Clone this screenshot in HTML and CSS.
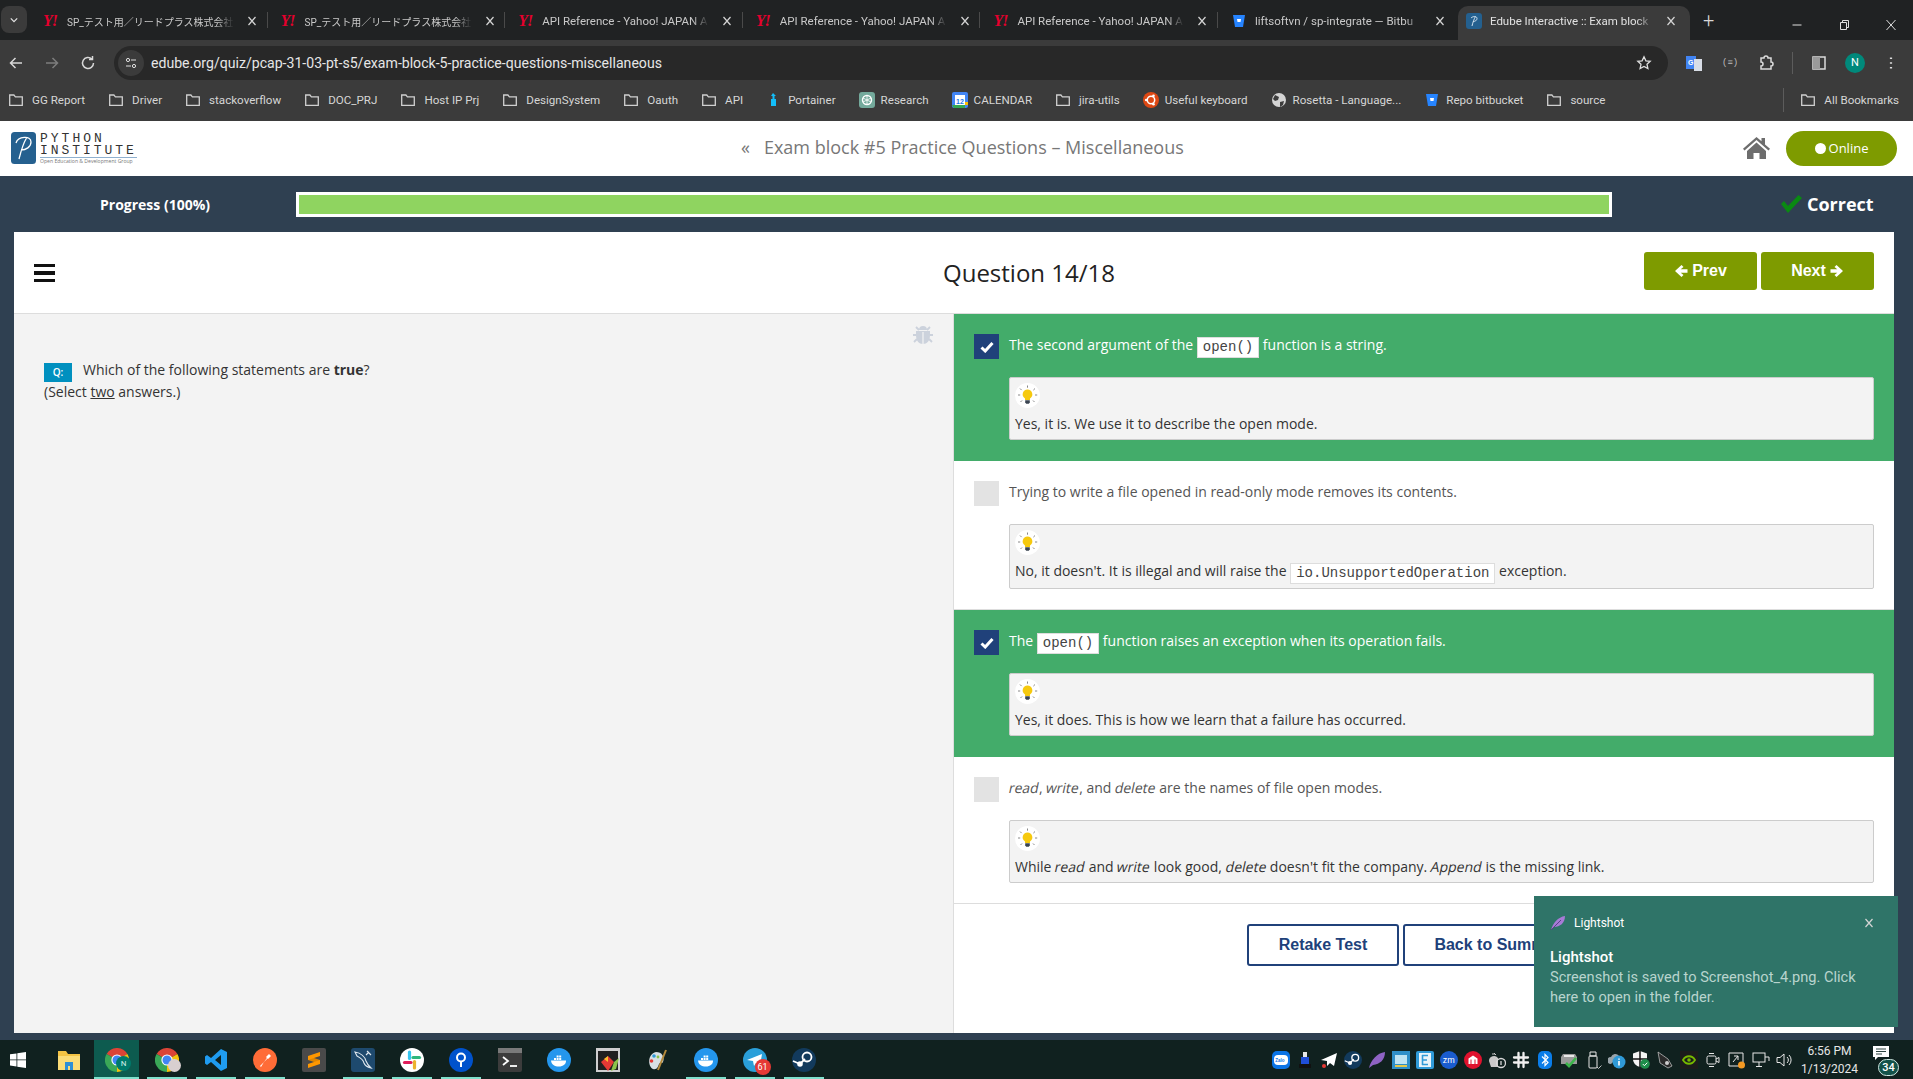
FILE: index.html
```html
<!DOCTYPE html>
<html lang="en">
<head>
<meta charset="utf-8">
<title>Edube Interactive :: Exam block</title>
<link rel="stylesheet" href="styles.css">
</head>
<body>
<svg class="sprite" xmlns="http://www.w3.org/2000/svg">
  <symbol id="folder" viewBox="0 0 16 16"><path d="M1.700 3h4.200l1.500 1.800h6.900v8.500H1.700z" fill="none" stroke="#d0d0d0" stroke-width="1.300"/></symbol>
  <symbol id="x" viewBox="0 0 10 10"><path d="M1.500 1l7 8M8.500 1l-7 8" stroke="#d5d5d5" stroke-width="1.200" fill="none"/></symbol>
  <symbol id="bitbucket" viewBox="0 0 16 16"><path d="M2 2h12l-2 12H4z" fill="#2684ff"/><path d="M6 6h4l-.5 3h-3z" fill="#fff"/></symbol>
  <symbol id="chrome" viewBox="0 0 24 24"><path d="M12 12L1.600 6A12 12 0 0 1 22.400 6Z" fill="#db4437"/><path d="M12 12L22.400 6A12 12 0 0 1 12 24Z" fill="#f4c20d"/><path d="M12 12L12 24A12 12 0 0 1 1.600 6Z" fill="#3aa757"/><circle cx="12" cy="12" r="5.600" fill="#fff"/><circle cx="12" cy="12" r="4.500" fill="#4285f4"/></symbol>
  <symbol id="docker" viewBox="0 0 24 24"><circle cx="12" cy="12" r="12" fill="#2496ed"/><path d="M4 12.500h15c.3 3.500-3 6-7 6-4.500 0-7.500-2-8-6z" fill="#fff"/><path d="M7 10h2v2H7zM9.600 10h2v2h-2zM12.200 10h2v2h-2zM9.600 7.500h2v2h-2zM12.200 7.500h2v2h-2z" fill="#fff"/></symbol>
  <symbol id="steam" viewBox="0 0 24 24"><circle cx="12" cy="12" r="12" fill="#123a5c"/><circle cx="15" cy="9" r="4.500" fill="none" stroke="#fff" stroke-width="1.800"/><circle cx="8" cy="16" r="2.800" fill="#fff"/><path d="M1 13l7 3 5-5" stroke="#fff" stroke-width="1.800" fill="none"/></symbol>
  <symbol id="bulb" viewBox="0 0 25 25"><circle cx="12.500" cy="12.500" r="12.500" fill="#fff"/><path d="M12.500 6.500a4.800 4.800 0 0 0-2.500 8.900v1.600h5v-1.600a4.800 4.800 0 0 0-2.500-8.900z" fill="#f6c90e"/><path d="M10.200 17.200h4.600v2.300l-1 1.300h-2.600l-1-1.300z" fill="#3a4450"/><path d="M12.500 2.500v2.200M5 5.500l1.600 1.600M20 5.500l-1.600 1.600M3 12h2.200M20 12h2.200M5.500 19l1.500-1.500M19.500 19L18 17.500" stroke="#6b6b6b" stroke-width=".8"/></symbol>
  <symbol id="tick" viewBox="0 0 14 12"><path d="M1.500 6.500l3.700 3.500 7.300-8" fill="none" stroke="#fff" stroke-width="3"/></symbol>
</svg>

<div class="tabstrip">
  <button class="tab-list"><svg class="chev" viewBox="0 0 10 6"><path d="M1 1l4 4 4-4" fill="none" stroke="#e4e4e4" stroke-width="1.500"/></svg></button>
  <div class="tab"><span class="yahoo">Y!</span><span class="tab-title tab-jp">SP_テスト用／リードプラス株式会社</span><svg class="tab-x"><use href="#x"/></svg></div>
  <div class="tab"><span class="yahoo">Y!</span><span class="tab-title tab-jp">SP_テスト用／リードプラス株式会社</span><svg class="tab-x"><use href="#x"/></svg></div>
  <div class="tab"><span class="yahoo">Y!</span><span class="tab-title">API Reference - Yahoo! JAPAN A</span><svg class="tab-x"><use href="#x"/></svg></div>
  <div class="tab"><span class="yahoo">Y!</span><span class="tab-title">API Reference - Yahoo! JAPAN A</span><svg class="tab-x"><use href="#x"/></svg></div>
  <div class="tab"><span class="yahoo">Y!</span><span class="tab-title">API Reference - Yahoo! JAPAN A</span><svg class="tab-x"><use href="#x"/></svg></div>
  <div class="tab tab-plain"><svg class="tab-fav"><use href="#bitbucket"/></svg><span class="tab-title">liftsoftvn / sp-integrate — Bitbu</span><svg class="tab-x"><use href="#x"/></svg></div>
  <div class="tab tab-active"><svg class="tab-fav" viewBox="0 0 16 16"><rect width="16" height="16" rx="3" fill="#24608f"/><path d="M6 13C7 9 8 6 9.500 3.500M5 5c2-2 6-2 6 .5 0 2-2 3-4 3" stroke="#cfe0ee" fill="none"/></svg><span class="tab-title">Edube Interactive :: Exam block</span><svg class="tab-x"><use href="#x"/></svg></div>
  <span class="new-tab">+</span>
  <div class="win-controls">
    <svg class="win-btn" viewBox="0 0 12 12"><path d="M1.500 6h9" stroke="#e0e0e0"/></svg>
    <svg class="win-btn" viewBox="0 0 12 12"><path d="M2.500 3.500h6v7h-6zM4.500 3.500v-2h6v7h-2" fill="none" stroke="#e0e0e0"/></svg>
    <svg class="win-btn" viewBox="0 0 12 12"><path d="M1.500 1l9 10M10.500 1l-9 10" stroke="#e0e0e0"/></svg>
  </div>
</div>

<div class="toolbar">
  <svg class="nav-ico" viewBox="0 0 16 16"><path d="M14 8H3M7.500 3L2.500 8l5 5" fill="none" stroke="#d8d8d8" stroke-width="1.500"/></svg>
  <svg class="nav-ico" viewBox="0 0 16 16"><path d="M2 8h11M8.500 3l5 5-5 5" fill="none" stroke="#7d7d7d" stroke-width="1.500"/></svg>
  <svg class="nav-ico nav-last" viewBox="0 0 16 16"><path d="M13.500 8a5.500 5.500 0 1 1-1.700-4M12.500 1v3.500H9" fill="none" stroke="#d8d8d8" stroke-width="1.500"/></svg>
  <div class="omnibox">
    <span class="site-tune"><svg viewBox="0 0 14 14"><circle cx="4" cy="4" r="1.600" fill="none" stroke="#e0e0e0"/><path d="M7 4h5M2 10h5" stroke="#e0e0e0"/><circle cx="10" cy="10" r="1.600" fill="none" stroke="#e0e0e0"/></svg></span>
    <span class="url">edube.org/quiz/pcap-31-03-pt-s5/exam-block-5-practice-questions-miscellaneous</span>
    <svg class="star" viewBox="0 0 16 16"><path d="M8 1.800l1.900 4 4.300.5-3.200 3 .9 4.300L8 11.400l-3.900 2.200.9-4.300-3.200-3 4.300-.5z" fill="none" stroke="#e0e0e0" stroke-width="1.300"/></svg>
  </div>
  <div class="ext-tools">
    <svg class="ext" viewBox="0 0 16 16"><path d="M0 1h10v13H0z" fill="#4285f4"/><path d="M8 4h8v12H8z" fill="#d8dde6"/><text x="2" y="10" class="ext-g">G</text></svg>
    <span class="ext-mini">(≡)</span>
    <svg class="ext" viewBox="0 0 16 16"><path d="M3 3h3a2 2 0 0 1 4 0h3v4a2 2 0 0 1 0 4v3H3v-3a2 2 0 0 0 0-4z" fill="none" stroke="#dcdcdc" stroke-width="1.500"/></svg>
    <span class="tool-sep"></span>
    <svg class="ext" viewBox="0 0 16 16"><rect x="2" y="2" width="12" height="12" fill="none" stroke="#dcdcdc" stroke-width="1.500"/><rect x="2" y="2" width="7" height="12" fill="#9a9a9a"/></svg>
    <span class="avatar">N</span>
    <svg class="ext" viewBox="0 0 16 16"><path d="M8 2.500v1.500M8 7.300v1.500M8 12v1.500" stroke="#dcdcdc" stroke-width="2.200"/></svg>
  </div>
</div>

<div class="bookmarks">
  <span class="bm"><svg class="bm-ico"><use href="#folder"/></svg>GG Report</span>
  <span class="bm"><svg class="bm-ico"><use href="#folder"/></svg>Driver</span>
  <span class="bm"><svg class="bm-ico"><use href="#folder"/></svg>stackoverflow</span>
  <span class="bm"><svg class="bm-ico"><use href="#folder"/></svg>DOC_PRJ</span>
  <span class="bm"><svg class="bm-ico"><use href="#folder"/></svg>Host IP Prj</span>
  <span class="bm"><svg class="bm-ico"><use href="#folder"/></svg>DesignSystem</span>
  <span class="bm"><svg class="bm-ico"><use href="#folder"/></svg>Oauth</span>
  <span class="bm"><svg class="bm-ico"><use href="#folder"/></svg>API</span>
  <span class="bm bm-fav"><svg class="bm-ico" viewBox="0 0 16 16"><path d="M7 1l3 3H8.500v3H10v7H5V7h1.500V4H5z" fill="#13bef9"/></svg>Portainer</span>
  <span class="bm bm-fav"><svg class="bm-ico" viewBox="0 0 16 16"><rect width="16" height="16" rx="3" fill="#74aa9c"/><circle cx="8" cy="8" r="4.500" fill="none" stroke="#fff" stroke-width="1.400"/><path d="M8 3.500v9M4 6l8 4M12 6l-8 4" stroke="#fff" stroke-width=".8"/></svg>Research</span>
  <span class="bm bm-fav"><svg class="bm-ico" viewBox="0 0 16 16"><rect width="16" height="16" rx="2" fill="#4285f4"/><rect x="3" y="3" width="10" height="10" fill="#fff"/><path d="M0 13h13v3H2z" fill="#34a853"/><path d="M13 13h3v-3h-3z" fill="#fbbc04"/><text x="4" y="11.500" class="cal-num">12</text></svg>CALENDAR</span>
  <span class="bm"><svg class="bm-ico"><use href="#folder"/></svg>jira-utils</span>
  <span class="bm bm-fav"><svg class="bm-ico" viewBox="0 0 16 16"><circle cx="8" cy="8" r="8" fill="#dd4814"/><circle cx="8" cy="8" r="3.700" fill="none" stroke="#fff" stroke-width="1.500"/><circle cx="3.200" cy="8" r="1.300" fill="#fff"/><circle cx="10.500" cy="3.800" r="1.300" fill="#fff"/><circle cx="10.500" cy="12.200" r="1.300" fill="#fff"/></svg>Useful keyboard</span>
  <span class="bm bm-fav"><svg class="bm-ico" viewBox="0 0 16 16"><circle cx="8" cy="8" r="7" fill="#d4d4d4"/><path d="M4 3l4 2-1 3-3 1-2-2zM9 10l4-1-1 4-3 2z" fill="#3c3c3c"/></svg>Rosetta - Language...</span>
  <span class="bm bm-fav"><svg class="bm-ico"><use href="#bitbucket"/></svg>Repo bitbucket</span>
  <span class="bm"><svg class="bm-ico"><use href="#folder"/></svg>source</span>
  <span class="bm-all"><svg class="bm-ico"><use href="#folder"/></svg>All Bookmarks</span>
</div>

<header class="site-head">
  <div class="logo">
    <svg class="logo-mark" viewBox="0 0 25 32"><rect width="25" height="32" rx="3.500" fill="#25608f"/><path d="M8 27C10 19 12.500 11 15.500 6M5 11C7 4.500 20 3 20 10c0 5-5 8-10 8" fill="none" stroke="#fff" stroke-width="1.300"/></svg>
    <div class="logo-text">
      <span class="logo-l1">PYTHON</span>
      <span class="logo-l2">INSTITUTE</span>
      <span class="logo-l3">Open Education &amp; Development Group</span>
    </div>
  </div>
  <div class="site-title"><span class="title-back">«</span>Exam block #5 Practice Questions – Miscellaneous</div>
  <svg class="home" viewBox="0 0 27 22"><path d="M13.500 0L0 11.800l1.500 1.700L13.500 3l12 10.500 1.500-1.700-5-4.400V1h-3.500v3.300z" fill="#6d6d6d"/><path d="M4 14L13.500 5.500 23 14v8h-6.500v-6h-6v6H4z" fill="#6d6d6d"/></svg>
  <div class="online"><span class="online-dot"></span>Online</div>
</header>

<main class="quiz">
  <div class="progress-row">
    <div class="progress-label">Progress (100%)</div>
    <div class="progress-track"><div class="progress-fill"></div></div>
    <div class="verdict">
      <svg class="verdict-tick" viewBox="0 0 22 18"><path d="M1 9l3-3 4 5L18.500 0 22 3 8 18z" fill="#0a8a12"/></svg>
      Correct
    </div>
  </div>

  <section class="card">
    <div class="card-head">
      <div class="burger"><span></span><span></span><span></span></div>
      <h1 class="q-title">Question 14/18</h1>
      <div class="pager">
        <button class="pager-btn"><svg class="arrow" viewBox="0 0 14 14"><path d="M7.500 1L1 7l6.500 6 2-2-2.800-2.300h6.800V5.300H6.700L9.500 3z" fill="#fff"/></svg>Prev</button>
        <button class="pager-btn">Next<svg class="arrow" viewBox="0 0 14 14"><path d="M6.500 1L13 7l-6.500 6-2-2 2.800-2.300H.5V5.300h6.800L4.500 3z" fill="#fff"/></svg></button>
      </div>
    </div>

    <div class="card-body">
      <div class="q-panel">
        <svg class="bug" viewBox="0 0 20 24"><path d="M6 6a4 4 0 0 1 8 0zM3 7h14v4c0 6-3 9-7 9s-7-3-7-9z" fill="#ccd2dc"/><path d="M3 3l3 3M17 3l-3 3M0 11h3M17 11h3M1 18l3-3M19 18l-3-3" stroke="#ccd2dc" stroke-width="1.800"/><path d="M10 8v12" stroke="#f3f3f3" stroke-width="1.200"/></svg>
        <p class="q-text"><span class="q-badge">Q:</span>Which of the following statements are <b>true</b>?<br>(Select <u>two</u> answers.)</p>
      </div>

      <div class="a-panel">
        <div class="answer answer-ok">
          <div class="a-head">
            <span class="cb cb-on"><svg class="tick"><use href="#tick"/></svg></span>
            <span class="a-text">The second argument of the <code>open()</code> function is a string.</span>
          </div>
          <div class="feedback">
            <svg class="bulb"><use href="#bulb"/></svg>
            <div class="fb-text">Yes, it is. We use it to describe the open mode.</div>
          </div>
        </div>

        <div class="answer answer-line">
          <div class="a-head">
            <span class="cb"></span>
            <span class="a-text">Trying to write a file opened in read-only mode removes its contents.</span>
          </div>
          <div class="feedback">
            <svg class="bulb"><use href="#bulb"/></svg>
            <div class="fb-text fb-code">No, it doesn't. It is illegal and will raise the <code>io.UnsupportedOperation</code> exception.</div>
          </div>
        </div>

        <div class="answer answer-ok">
          <div class="a-head">
            <span class="cb cb-on"><svg class="tick"><use href="#tick"/></svg></span>
            <span class="a-text">The <code>open()</code> function raises an exception when its operation fails.</span>
          </div>
          <div class="feedback">
            <svg class="bulb"><use href="#bulb"/></svg>
            <div class="fb-text">Yes, it does. This is how we learn that a failure has occurred.</div>
          </div>
        </div>

        <div class="answer">
          <div class="a-head">
            <span class="cb"></span>
            <span class="a-text"><i>read</i>, <i>write</i>, and <i>delete</i> are the names of file open modes.</span>
          </div>
          <div class="feedback">
            <svg class="bulb"><use href="#bulb"/></svg>
            <div class="fb-text">While <i>read</i> and <i>write</i> look good, <i>delete</i> doesn't fit the company. <i>Append</i> is the missing link.</div>
          </div>
        </div>

        <div class="actions">
          <button class="outline-btn">Retake Test</button>
          <button class="outline-btn outline-wide">Back to Summary</button>
        </div>
      </div>
    </div>
  </section>
</main>

<aside class="toast">
  <div class="toast-top">
    <svg class="toast-ico" viewBox="0 0 16 16"><path d="M1 15C3 8 8 2 15 1c0 7-5 11-11 11z" fill="#a77bd6"/><path d="M1 15L11 5" stroke="#5b3f8a"/></svg>
    <span class="toast-app">Lightshot</span>
    <svg class="toast-x"><use href="#x"/></svg>
  </div>
  <div class="toast-title">Lightshot</div>
  <div class="toast-body">Screenshot is saved to Screenshot_4.png. Click here to open in the folder.</div>
</aside>

<footer class="taskbar">
  <div class="tb-left">
    <div class="tb-start"><svg class="win-logo" viewBox="0 0 16 16"><path d="M0 2.300l6.500-.9v6.100H0zM7.300 1.300L16 0v7.500H7.300zM0 8.300h6.500v6.200L0 13.600zM7.300 8.300H16V16l-8.700-1.200z" fill="#fff"/></svg></div>
    <div class="tb-app"><svg class="tb-ico" viewBox="0 0 24 24"><path d="M1 3h8l2 3h12v16H1z" fill="#f3c344"/><path d="M1 8h22v14H1z" fill="#fbdc77"/><path d="M8 14h8v8h-3v-4h-2v4H8z" fill="#2e8fd6"/></svg></div>
    <div class="tb-app tb-active"><svg class="tb-ico"><use href="#chrome"/></svg><span class="tb-profile">N</span></div>
    <div class="tb-app tb-run"><svg class="tb-ico"><use href="#chrome"/></svg><span class="tb-face"></span></div>
    <div class="tb-app tb-run"><svg class="tb-ico" viewBox="0 0 24 24"><path d="M17 1l6 3v16l-6 3-10-9-4 3-2-1.500v-7L3 7l4 3zM17 7l-6 5 6 5z" fill="#1f9cf0" fill-rule="evenodd"/></svg></div>
    <div class="tb-app tb-run"><svg class="tb-ico" viewBox="0 0 24 24"><circle cx="12" cy="12" r="12" fill="#ff6c37"/><path d="M7 18l4-4 5-7 1 1-6 6-3 5z" fill="#fff"/><path d="M13 9l3-3 2 2-3 3z" fill="#fff"/></svg></div>
    <div class="tb-app"><svg class="tb-ico" viewBox="0 0 24 24"><rect width="24" height="24" rx="2" fill="#4a4a4a"/><path d="M6 8v4l12 4v-4z" fill="#e08600"/><path d="M18 4L6 8v4l12-4zM18 12L6 16v4l12-4z" fill="#ff9800"/></svg></div>
    <div class="tb-app tb-run"><svg class="tb-ico" viewBox="0 0 24 24"><rect width="24" height="24" rx="3" fill="#1e4a6e"/><path d="M4 4c6 1 10 5 11 9 1 3 3 5 5 7-4-1-6-2-7-5-1-4-5-6-7-7zM16 3l4 4M15 7l3-3" fill="none" stroke="#dfe8ef" stroke-width="1.100"/></svg></div>
    <div class="tb-app tb-run"><svg class="tb-ico" viewBox="0 0 24 24"><circle cx="12" cy="12" r="12" fill="#fff"/><path d="M9.500 4v6.500" stroke="#36c5f0" stroke-width="3.200" stroke-linecap="round"/><path d="M4.500 14.500H11" stroke="#e01e5a" stroke-width="3.200" stroke-linecap="round"/><path d="M14.500 20v-6.500" stroke="#ecb22e" stroke-width="3.200" stroke-linecap="round"/><path d="M19.500 9.500H13" stroke="#2eb67d" stroke-width="3.200" stroke-linecap="round"/></svg></div>
    <div class="tb-app tb-run"><svg class="tb-ico" viewBox="0 0 24 24"><circle cx="12" cy="12" r="12" fill="#0052cc"/><circle cx="12" cy="9.500" r="4" fill="none" stroke="#fff" stroke-width="2"/><path d="M12 13v6" stroke="#fff" stroke-width="2"/></svg></div>
    <div class="tb-app"><svg class="tb-ico" viewBox="0 0 24 24"><rect width="24" height="24" rx="2" fill="#3c3c3c"/><rect width="24" height="5" fill="#7a7a7a"/><path d="M5 9l5 4-5 4" fill="none" stroke="#fff" stroke-width="1.800"/><path d="M12 18h7" stroke="#fff" stroke-width="1.800"/></svg></div>
    <div class="tb-app"><svg class="tb-ico"><use href="#docker"/></svg></div>
    <div class="tb-app"><svg class="tb-ico" viewBox="0 0 24 24"><rect width="24" height="24" fill="#cfcfcf"/><rect x="2" y="3" width="20" height="19" fill="#202020"/><path d="M12 8l6 6-6 9-7-9z" fill="#e53935"/><path d="M18 14l5-4-3 11-5 2z" fill="#8bc34a"/><path d="M8 11l4-3v6z" fill="#fbc02d"/></svg></div>
    <div class="tb-app"><svg class="tb-ico" viewBox="0 0 24 24"><path d="M11 4c6 0 9 5 7 10-1 2-3 0-4 2-1 3-2 6-6 5-5-2-6-15 3-17z" fill="#d8e0e4"/><circle cx="9" cy="8" r="1.800" fill="#2f9ad7"/><circle cx="6.500" cy="13" r="1.800" fill="#e53935"/><circle cx="13" cy="9" r="1.400" fill="#8bc34a"/><path d="M13 22L21 2" stroke="#b58a3c" stroke-width="2"/></svg></div>
    <div class="tb-app tb-run"><svg class="tb-ico"><use href="#docker"/></svg></div>
    <div class="tb-app tb-run"><svg class="tb-ico" viewBox="0 0 24 24"><circle cx="12" cy="12" r="12" fill="#2a9fd9"/><path d="M4 12L19 6l-2 12-4-3-2 3-1-5z" fill="#fff"/></svg><span class="tb-badge">61</span></div>
    <div class="tb-app tb-run"><svg class="tb-ico"><use href="#steam"/></svg></div>
  </div>

  <div class="tb-right">
    <div class="tray">
      <svg class="tr" viewBox="0 0 18 18"><rect width="18" height="18" rx="5" fill="#0b74e5"/><rect x="2" y="4" width="14" height="10" rx="4" fill="#fff"/><text x="3.200" y="11" class="tr-zalo">Zalo</text></svg>
      <svg class="tr" viewBox="0 0 18 18"><path d="M5 16V6h8v10z" fill="#1f4ed8"/><path d="M3 17V13h12v4z" fill="#111"/><path d="M7 1h4v5H7z" fill="#e8e8e8"/></svg>
      <svg class="tr" viewBox="0 0 18 18"><path d="M1 9L17 2l-3 13-4-3-3 3V10z" fill="#fff"/><circle cx="4" cy="15" r="2" fill="#e53935"/></svg>
      <svg class="tr"><use href="#steam"/></svg>
      <svg class="tr" viewBox="0 0 18 18"><path d="M1 17C3 9 9 2 17 1c0 8-5 12-12 13z" fill="#8e63c4"/></svg>
      <svg class="tr" viewBox="0 0 18 18"><rect width="18" height="18" fill="#2f8fc9"/><rect x="3" y="4" width="12" height="9" fill="#bfe3f3"/><path d="M3 15h12" stroke="#e6c84a" stroke-width="2"/></svg>
      <svg class="tr" viewBox="0 0 18 18"><rect width="18" height="18" rx="2" fill="#2f9ad7"/><rect x="3" y="2" width="12" height="14" fill="#e8f3f9"/><path d="M6 4.500h6M6 9h5M6 13.500h6M6.500 4v10" stroke="#2f9ad7" stroke-width="1.600"/></svg>
      <svg class="tr" viewBox="0 0 18 18"><circle cx="9" cy="9" r="9" fill="#1a5ccf"/><text x="2.800" y="12" class="tr-zm">zm</text></svg>
      <svg class="tr" viewBox="0 0 18 18"><circle cx="9" cy="9" r="9" fill="#e0122e"/><path d="M4.500 7.500L9 4.500l4.500 3v5.500h-2V8.500h-1v4.500h-3V8.500h-1v4.500h-2z" fill="#fff"/></svg>
      <svg class="tr" viewBox="0 0 18 18"><path d="M1 10a5 5 0 0 1 9-3v9H3z" fill="#c9c9c9"/><path d="M6 2l2 2M4 3h3" stroke="#c9c9c9"/><circle cx="13" cy="12" r="4.500" fill="none" stroke="#d8d8d8" stroke-width="1.300"/><path d="M13 10v4" stroke="#d8d8d8" stroke-width="1.300"/></svg>
      <svg class="tr" viewBox="0 0 18 18"><path d="M6.500 2v14M11.500 2v14M2 6.500h14M2 11.500h14" stroke="#f0f0f0" stroke-width="2.300" stroke-linecap="round"/></svg>
      <svg class="tr" viewBox="0 0 18 18"><rect x="2" width="14" height="18" rx="5" fill="#0a7de8"/><path d="M6 5.500l6 6-3 3V3.500l3 3-6 6" fill="none" stroke="#fff" stroke-width="1.200"/></svg>
      <svg class="tr" viewBox="0 0 18 18"><path d="M1 6l2-3h12l2 3v7H1z" fill="#9a9a9a"/><path d="M4 5h10" stroke="#e8e8e8" stroke-width="2"/><path d="M6 12l3 3 7-8" fill="none" stroke="#3bb54a" stroke-width="2.600"/></svg>
      <svg class="tr" viewBox="0 0 18 18"><rect x="5" y="5" width="8" height="12" rx="1" fill="none" stroke="#e8e8e8"/><path d="M6 1h6v4H6z" fill="none" stroke="#e8e8e8"/><path d="M13 16l1.500 1.500 3-3" fill="none" stroke="#e8e8e8" stroke-width=".8"/></svg>
      <svg class="tr" viewBox="0 0 18 18"><path d="M3 13a3.500 3.500 0 0 1 0-7 4.500 4.500 0 0 1 8-1" fill="#9aa4aa"/><circle cx="11" cy="11" r="6.500" fill="#2f9ad7"/><path d="M11 10v4.500M11 7.500v1.300" stroke="#fff" stroke-width="1.600"/></svg>
      <svg class="tr" viewBox="0 0 18 18"><path d="M8 0l7 2.500V8c0 4-3 7-7 8-4-1-7-4-7-8V2.500z" fill="#f4f4f4"/><path d="M8 0v16M1 8h14" stroke="#111" stroke-width="1.500"/><circle cx="13" cy="13" r="4.800" fill="#1e8e4b"/><path d="M10.800 13l1.600 1.700 2.900-3" fill="none" stroke="#fff"/></svg>
      <svg class="tr" viewBox="0 0 18 18"><path d="M2 1l10 7 4 7-4 2-8-5z" fill="#2a2a2a" stroke="#cfcfcf" stroke-width=".7"/><circle cx="11" cy="12" r="2" fill="#cfcfcf"/></svg>
      <svg class="tr" viewBox="0 0 18 18"><rect width="18" height="18" fill="#1c1c1c"/><path d="M3 9c3-5 9-5 12 0-3 5-9 5-12 0z" fill="none" stroke="#76b900" stroke-width="1.800"/><circle cx="9" cy="9" r="1.800" fill="#76b900"/></svg>
      <svg class="tr" viewBox="0 0 18 18"><rect x="3" y="5" width="9" height="8" rx="1.500" fill="none" stroke="#e8e8e8"/><path d="M12 8l3-1.500v5L12 10M5 2.500h5M5 15.500h5" fill="none" stroke="#e8e8e8"/></svg>
      <svg class="tr" viewBox="0 0 18 18"><path d="M1 2h14v13H1z" fill="none" stroke="#e8e8e8"/><path d="M5 11l5-6M6 5h4v4" fill="none" stroke="#e8e8e8"/><circle cx="13.500" cy="14" r="3.500" fill="#f59a23"/></svg>
      <svg class="tr" viewBox="0 0 18 18"><rect x="1" y="2" width="12" height="9" fill="none" stroke="#e8e8e8"/><path d="M7 11v4M4 15.500h6M13 6h4v4" fill="none" stroke="#e8e8e8"/></svg>
      <svg class="tr" viewBox="0 0 18 18"><path d="M1 6.500h3L8 3v12l-4-3.500H1z" fill="none" stroke="#e8e8e8"/><path d="M11 6a4 4 0 0 1 0 6M13 4a7 7 0 0 1 0 10" fill="none" stroke="#e8e8e8"/></svg>
    </div>
    <div class="clock"><span>6:56 PM</span><span>1/13/2024</span></div>
    <div class="notif">
      <svg class="notif-ico" viewBox="0 0 16 14"><path d="M0 0h16v11H5l-3 3v-3H0z" fill="#fff"/><path d="M3 3h10M3 5.500h10M3 8h6" stroke="#16302d" stroke-width=".9"/></svg>
      <span class="notif-badge">34</span>
    </div>
  </div>
</footer>
</body>
</html>
```

FILE: styles.css
```css
* { box-sizing: border-box; }
html, body { margin: 0; height: 1079px; overflow: hidden; }
body {
  width: 1913px;
  display: flex;
  flex-direction: column;
  font-family: "Open Sans", "Noto Sans", sans-serif;
  position: relative;
  background: #2f4051;
}
.sprite { display: none; }

/* browser tabs */
.tabstrip {
  height: 40px;
  flex: none;
  display: flex;
  align-items: flex-end;
  padding-left: 1px;
  background: #202223;
  font-family: Roboto, "Noto Sans CJK JP", sans-serif;
}
.tab-list {
  width: 26px;
  height: 27px;
  margin: 0 3px 7px 0;
  padding: 0;
  border: 0;
  border-radius: 8px;
  background: #3b3b3b;
  display: flex;
  align-items: center;
  justify-content: center;
}
.chev { width: 8px; height: 6px; }
.tab {
  width: 237.600px;
  height: 34px;
  flex: none;
  padding: 0 0 4px 13px;
  display: flex;
  align-items: center;
  color: #c9c9c9;
  font-size: 11.500px;
  background: linear-gradient(#4a4a4a, #4a4a4a) right 6px / 1px 16px no-repeat;
}
.tab-plain { background: none; }
.tab-active {
  width: 232px;
  margin-left: 2.400px;
  padding-left: 8px;
  border-radius: 10px 10px 0 0;
  background: #3b3b3b;
  color: #e2e2e2;
}
.yahoo {
  width: 16px;
  flex: none;
  color: #e5002d;
  font: italic bold 16px "Liberation Serif", serif;
  letter-spacing: -1px;
}
.tab-fav { width: 16px; height: 16px; flex: none; }
.tab-title {
  width: 167px;
  margin-left: 8px;
  flex: none;
  overflow: hidden;
  white-space: nowrap;
  -webkit-mask-image: linear-gradient(to right, #000 90%, transparent);
  mask-image: linear-gradient(to right, #000 90%, transparent);
}
.tab-jp { font-size: 10px; }
.tab-active .tab-title { width: 163px; }
.tab-x { width: 10px; height: 10px; margin-left: 13px; flex: none; }
.new-tab { margin: 0 0 9px 13px; color: #d8d8d8; font-size: 20px; font-weight: 300; line-height: 22px; }
.win-controls { margin-left: auto; display: flex; gap: 35px; padding: 0 16px 9px 0; }
.win-btn { width: 12px; height: 12px; }

/* toolbar */
.toolbar {
  height: 41px;
  flex: none;
  display: flex;
  align-items: center;
  padding: 6px 0 1px 8px;
  background: #3b3b3b;
}
.nav-ico { width: 16px; height: 16px; margin-right: 20px; flex: none; }
.nav-last { margin-right: 18px; }
.omnibox {
  width: 1554px;
  height: 34px;
  flex: none;
  display: flex;
  align-items: center;
  padding: 0 16px 0 4px;
  border-radius: 17px;
  background: #282828;
}
.site-tune {
  width: 26px;
  height: 26px;
  border-radius: 50%;
  background: #3b3b3b;
  display: flex;
  align-items: center;
  justify-content: center;
}
.site-tune svg { width: 14px; height: 14px; }
.url { margin-left: 7px; color: #e6e6e6; font: 14.100px Roboto, sans-serif; flex: 1; }
.star { width: 16px; height: 16px; }
.ext-tools { flex: 1; display: flex; align-items: center; padding-left: 18px; }
.ext { width: 16px; height: 16px; flex: none; margin-right: 20px; }
.ext-g { font: bold 7px "Liberation Sans", sans-serif; fill: #fff; }
.ext-mini { width: 16px; margin-right: 20px; color: #bbb; font: 9px "Liberation Mono", monospace; white-space: nowrap; }
.tool-sep { width: 1px; height: 22px; margin: 0 18px 0 -2px; background: #5c5c5c; }
.avatar {
  width: 20px;
  height: 20px;
  margin: 0 18px 0 -2px;
  flex: none;
  border-radius: 50%;
  background: #00897b;
  color: #fff;
  font: 11px/20px Roboto, sans-serif;
  text-align: center;
}

/* bookmarks */
.bookmarks {
  height: 40px;
  flex: none;
  display: flex;
  align-items: center;
  gap: 23px;
  padding: 0 0 2px 8px;
  background: #3b3b3b;
  color: #d6d6d6;
  font: 11.600px Roboto, sans-serif;
}
.bm, .bm-all { display: flex; align-items: center; gap: 8px; white-space: nowrap; }
.bm-fav { gap: 6px; }
.bm-ico { width: 16px; height: 16px; flex: none; }
.cal-num { font: bold 7px "Liberation Sans", sans-serif; fill: #1a73e8; }
.bm-all {
  margin-left: auto;
  height: 24px;
  padding: 0 14px 0 16px;
  border-left: 1px solid #5c5c5c;
}

/* site header */
.site-head {
  height: 55px;
  flex: none;
  display: flex;
  align-items: center;
  padding: 0 16px 0 11px;
  background: #fff;
}
.logo { display: flex; width: 123px; gap: 4px; }
.logo-mark { width: 25px; height: 32px; flex: none; }
.logo-text { display: flex; flex-direction: column; color: #333; font-family: "Liberation Mono", monospace; }
.logo-l1 { font-size: 13px; line-height: 13px; letter-spacing: 3px; white-space: nowrap; }
.logo-l2 { font-size: 13px; line-height: 12px; letter-spacing: 2.950px; white-space: nowrap; border-bottom: 1px solid #8fb0cf; }
.logo-l3 { font: 5.100px/7px "Open Sans", sans-serif; color: #777; white-space: nowrap; }
.site-title {
  margin: -4px 0 0 607px;
  color: #777;
  font-size: 18px;
  white-space: nowrap;
}
.title-back { margin-right: 14px; }
.home { width: 27px; height: 22px; margin: -2px 0 0 auto; }
.online {
  width: 111px;
  height: 35px;
  margin: -1px 0 0 16px;
  border-radius: 18px;
  background: #7e9b00;
  color: #fff;
  font-size: 13px;
  display: flex;
  align-items: center;
  justify-content: center;
  gap: 3px;
}
.online-dot { width: 11px; height: 11px; border-radius: 50%; background: #fff; }

/* quiz */
.quiz { flex: 1; min-height: 0; display: flex; flex-direction: column; }
.progress-row { height: 56px; flex: none; display: flex; align-items: center; padding-left: 100px; }
.progress-label { width: 196px; color: #fff; font-size: 14px; font-weight: 700; }
.progress-track { width: 1316px; height: 25px; border: 3px solid #fff; background: #fff; }
.progress-fill { width: 100%; height: 100%; background: #8fd460; }
.verdict {
  margin-left: 168px;
  display: flex;
  align-items: center;
  gap: 5px;
  color: #fff;
  font-size: 18px;
  font-weight: 700;
}
.verdict-tick { width: 22px; height: 18px; }
.card {
  height: 801px;
  flex: none;
  margin: 0 19px 0 14px;
  display: flex;
  flex-direction: column;
  background: #fff;
}
.card-head {
  height: 82px;
  flex: none;
  display: flex;
  align-items: center;
  padding: 0 20px;
  border-bottom: 1px solid #ddd;
}
.burger { width: 21px; display: flex; flex-direction: column; gap: 4px; margin-top: 1px; }
.burger span { height: 3.500px; background: #111; }
.q-title {
  margin: 0 0 0 888px;
  color: #222;
  font-size: 24px;
  font-weight: 400;
  white-space: nowrap;
}
.pager { margin: -3px 0 0 auto; display: flex; gap: 4px; }
.pager-btn {
  width: 113px;
  height: 38px;
  border: 0;
  border-radius: 3px;
  background: #7e9b00;
  color: #fff;
  font: bold 16px "Liberation Sans", sans-serif;
  display: flex;
  align-items: center;
  justify-content: center;
  gap: 4px;
}
.arrow { width: 14px; height: 14px; }
.card-body { flex: 1; min-height: 0; display: flex; }
.q-panel {
  width: 940px;
  flex: none;
  padding: 45px 30px 0;
  border-right: 1px solid #ddd;
  background: #f3f3f3;
  position: relative;
}
.bug { width: 20px; height: 24px; position: absolute; top: 10px; right: 20px; }
.q-text { margin: 0; color: #333; font-size: 14px; line-height: 22px; }
.q-badge {
  display: inline-block;
  width: 28px;
  height: 19px;
  margin: -3px 11px -3px 0;
  background: #0090bf;
  color: #fff;
  font-size: 10px;
  font-weight: 600;
  line-height: 19px;
  text-align: center;
  vertical-align: -1px;
}
.a-panel { flex: 1; min-width: 0; display: flex; flex-direction: column; }
.answer { padding: 20px; color: #555; font-size: 14px; }
.answer i { display: inline-block; font-style: normal; transform: skewX(-12deg); }
.answer-ok { padding-bottom: 21px; background: #43ac6a; color: #fff; }
.answer-line { border-bottom: 1px solid #ddd; }
.a-head { height: 43px; display: flex; gap: 10px; line-height: 22px; }
.cb { width: 25px; height: 25px; flex: none; background: #e3e3e3; display: flex; align-items: center; justify-content: center; }
.cb-on { background: #20417a; }
.tick { width: 14px; height: 12px; }
code {
  display: inline-block;
  padding: 0 5px;
  border: 1px solid #ddd;
  background: #fff;
  color: #444;
  font: 14px/19px "Liberation Mono", monospace;
  vertical-align: -1px;
}
.feedback {
  margin-left: 35px;
  padding: 5px;
  border: 1px solid #ccc;
  border-radius: 2px;
  background: #f3f3f3;
  color: #333;
}
.bulb { width: 25px; height: 25px; display: block; margin-bottom: 5px; }
.fb-text { height: 21px; line-height: 21px; }
.fb-code { height: 23px; }
.actions {
  flex: 1;
  display: flex;
  justify-content: center;
  gap: 4px;
  padding-top: 20px;
  border-top: 1px solid #ddd;
}
.outline-btn {
  width: 152px;
  height: 42px;
  border: 2px solid #20417a;
  border-radius: 3px;
  background: #fff;
  color: #20417a;
  font: bold 16px "Liberation Sans", sans-serif;
}
.outline-wide { width: 198px; }

/* toast */
.toast {
  width: 364px;
  height: 131px;
  position: absolute;
  left: 1534px;
  top: 896px;
  padding: 18px 16px;
  background: #2f7468;
  color: #fff;
  font-family: Roboto, sans-serif;
}
.toast-top { display: flex; align-items: center; height: 18px; font-size: 12px; }
.toast-ico { width: 16px; height: 16px; margin-right: 8px; }
.toast-x { width: 10px; height: 10px; margin-left: auto; margin-right: 8px; }
.toast-title { margin-top: 15px; font-size: 15px; font-weight: 500; line-height: 20px; }
.toast-body { color: #b9d4ce; font-size: 14.600px; line-height: 20px; }

/* taskbar */
.taskbar {
  height: 39px;
  flex: none;
  display: flex;
  justify-content: space-between;
  background: #10211f;
  color: #fff;
  font: 12px Roboto, sans-serif;
}
.tb-left { display: flex; }
.tb-start { width: 44px; padding: 0 0 0 10px; display: flex; align-items: center; }
.win-logo { width: 16px; height: 16px; }
.tb-app {
  width: 40px;
  height: 39px;
  margin: 0 4.500px;
  padding-top: 2px;
  flex: none;
  display: flex;
  align-items: center;
  justify-content: center;
  position: relative;
  border-bottom: 2px solid transparent;
}
.tb-run { border-bottom-color: #7fe0cc; }
.tb-active { width: 45px; margin: 0 3px 0 1px; background: #0d5b4f; border-bottom-color: #7fe0cc; }
.tb-ico { width: 24px; height: 24px; }
.tb-profile {
  width: 15px;
  height: 15px;
  position: absolute;
  right: 8px;
  bottom: 6px;
  border-radius: 50%;
  background: #00796b;
  color: #cdeee6;
  font-size: 8px;
  line-height: 15px;
  text-align: center;
}
.tb-face { width: 13px; height: 13px; position: absolute; right: 6px; bottom: 5px; border-radius: 50%; background: #d8cfd0; }
.tb-badge {
  width: 16px;
  height: 16px;
  position: absolute;
  right: 4px;
  bottom: 2px;
  border-radius: 50%;
  background: #e53935;
  font-size: 9px;
  line-height: 16px;
  text-align: center;
}
.tb-right { display: flex; align-items: center; }
.tray { width: 528px; display: flex; align-items: center; }
.tr { width: 18px; height: 18px; margin: 0 3px; flex: none; }
.tr-zalo { font: bold 4.500px "Liberation Sans", sans-serif; fill: #0b74e5; }
.tr-zm { font: 9px "Liberation Sans", sans-serif; fill: #fff; }
.clock { width: 65px; display: flex; flex-direction: column; align-items: center; line-height: 18px; color: #e6e6e6; }
.notif { width: 51px; height: 39px; position: relative; }
.notif-ico { width: 16px; height: 14px; position: absolute; left: 11px; top: 6px; }
.notif-badge {
  width: 21px;
  height: 17px;
  position: absolute;
  left: 16px;
  top: 19px;
  border-radius: 9px;
  background: #13524a;
  border: 1px solid #cfe6e0;
  color: #fff;
  font-size: 11px;
  font-weight: 500;
  line-height: 15px;
  text-align: center;
}
```
